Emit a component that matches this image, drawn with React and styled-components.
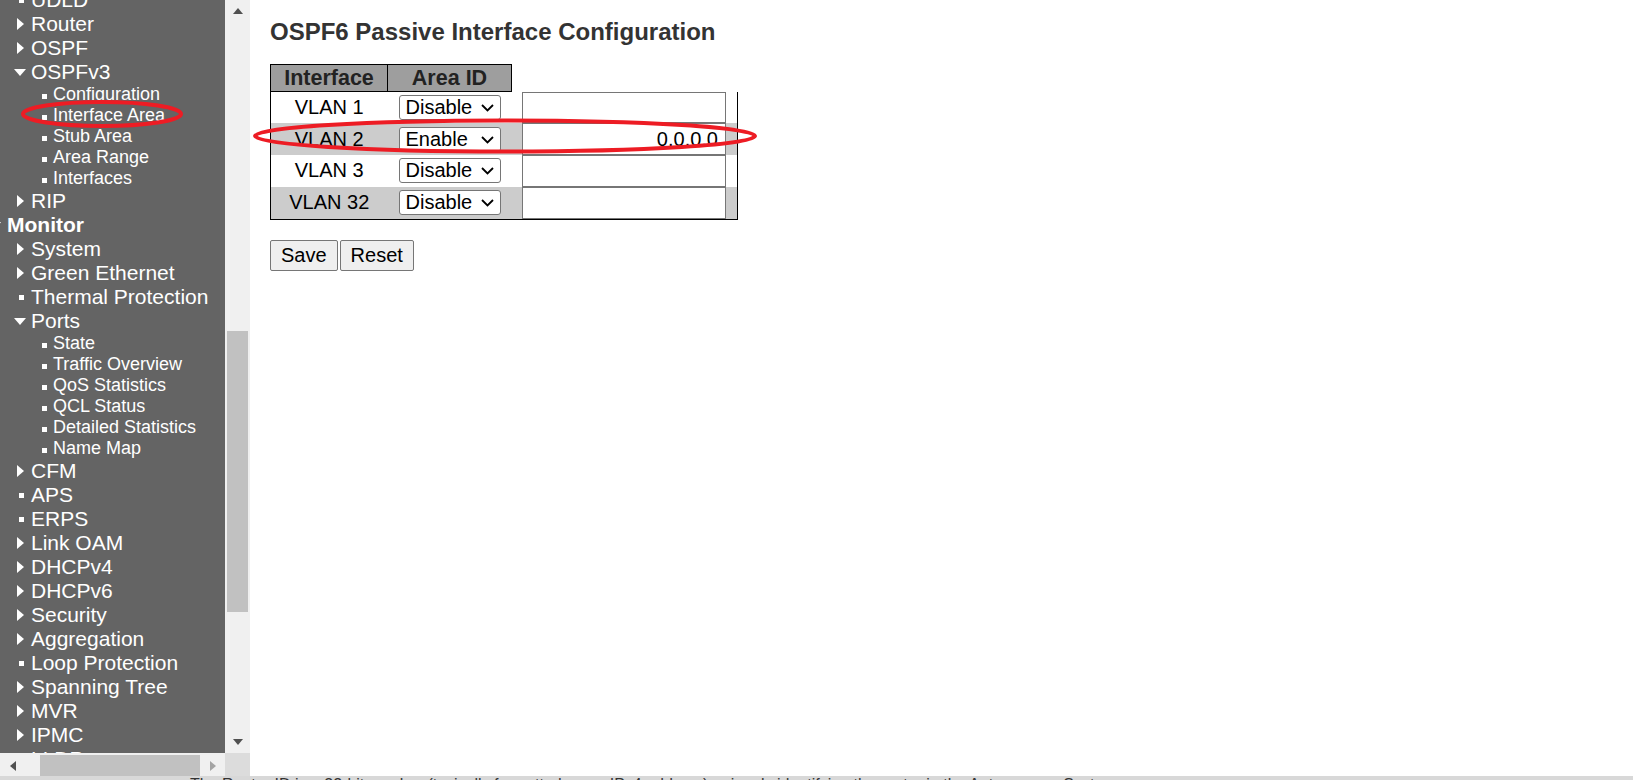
import React from "react";
import styled, { createGlobalStyle } from "styled-components";

const GlobalStyle = createGlobalStyle`
  html, body { margin: 0; padding: 0; overflow: hidden; background: #fff; }
  body { font-family: "Liberation Sans", Arial, sans-serif; }
`;

const Page = styled.div`
  position: relative;
  width: 1633px;
  height: 780px;
  display: grid;
  grid-template-rows: 776px 4px;
  overflow: hidden;
`;

const Top = styled.div`
  display: flex;
  min-height: 0;
`;

const LeftFrame = styled.div`
  width: 250px;
  flex: none;
  display: grid;
  grid-template-rows: 753px 23px;
`;

const FrameBody = styled.div`
  display: flex;
  min-height: 0;
`;

const Sidebar = styled.nav`
  width: 225px;
  flex: none;
  background: #646464;
  color: #fff;
  overflow: hidden;
`;

const MenuList = styled.ul`
  list-style: none;
  margin: -12px 0 0;
  padding: 0;
`;

const MenuItem = styled.li`
  display: flex;
  align-items: center;
  white-space: nowrap;
  height: ${(p) => (p.$sub ? 21 : 24)}px;
  padding-left: ${(p) => (p.$sub ? 35 : 11)}px;
  font-size: ${(p) => (p.$sub ? 18 : 21)}px;
`;

const SectionTitle = styled.li`
  display: flex;
  align-items: center;
  height: 24px;
  font-size: 21px;
  font-weight: bold;
  white-space: nowrap;
`;

const Marker = styled.span`
  width: 18px;
  flex: none;
  display: flex;
  justify-content: center;
  align-items: center;
  margin-right: ${(p) => (p.$sub ? 0 : 2)}px;
  margin-top: ${(p) => (p.$sub ? 3 : 0)}px;

  &::before {
    content: "";
    display: block;
    ${(p) =>
      p.$kind === "right"
        ? `width:0;height:0;border-left:7px solid #fff;border-top:6px solid transparent;border-bottom:6px solid transparent;`
        : p.$kind === "down"
        ? `width:0;height:0;border-top:7px solid #fff;border-left:6.5px solid transparent;border-right:6.5px solid transparent;`
        : `width:5px;height:5px;background:#fff;margin-left:${p.$sub ? 0 : 2}px;`}
  }
`;

const SectionMarker = styled.span`
  width: 0;
  height: 0;
  margin-left: -9px;
  margin-right: 6px;
  border-top: 7px solid #fff;
  border-left: 5.5px solid transparent;
  border-right: 5.5px solid transparent;
`;

const VScroll = styled.div`
  width: 25px;
  flex: none;
  background: #f0f0f0;
  display: flex;
  flex-direction: column;
`;

const ArrowBox = styled.div`
  height: ${(p) => p.$h}px;
  flex: none;
  display: flex;
  justify-content: center;
  align-items: ${(p) => (p.$end ? "flex-start" : "center")};
  padding-top: ${(p) => (p.$end ? 8 : 0)}px;
  box-sizing: border-box;
`;

const Arrow = styled.span`
  width: 0;
  height: 0;
  ${(p) =>
    p.$dir === "up"
      ? `border-bottom:6px solid ${p.$c};border-left:5.5px solid transparent;border-right:5.5px solid transparent;`
      : p.$dir === "down"
      ? `border-top:6px solid ${p.$c};border-left:5.5px solid transparent;border-right:5.5px solid transparent;`
      : p.$dir === "left"
      ? `border-right:6px solid ${p.$c};border-top:5.5px solid transparent;border-bottom:5.5px solid transparent;`
      : `border-left:6px solid ${p.$c};border-top:5.5px solid transparent;border-bottom:5.5px solid transparent;`}
`;

const VTrack = styled.div`
  flex: 1;
  min-height: 0;
`;

const VThumb = styled.div`
  width: 21px;
  margin-left: 2px;
  background: #c1c1c1;
`;

const HScroll = styled.div`
  display: flex;
  background: #f0f0f0;
`;

const HArrowBox = styled.div`
  width: 25px;
  flex: none;
  display: flex;
  align-items: center;
  justify-content: center;
  padding-top: 2px;
  box-sizing: border-box;
`;

const HTrack = styled.div`
  flex: 1;
  display: flex;
  align-items: flex-end;
`;

const HThumb = styled.div`
  height: 21px;
  background: #c1c1c1;
`;

const Corner = styled.div`
  width: 25px;
  flex: none;
  background: #dcdcdc;
`;

const Main = styled.main`
  flex: 1;
  background: #fff;
  padding: 18px 0 0 20px;
`;

const Title = styled.h1`
  margin: 0;
  font-size: 24px;
  line-height: 28px;
  font-weight: bold;
  color: #333;
`;

const ConfigTable = styled.table`
  border-collapse: collapse;
  margin-top: 18px;
  font-size: 20px;
  color: #000;
`;

const HeadCell = styled.th`
  background: #9e9e9e;
  border: 1px solid #000;
  font-size: 21.5px;
  font-weight: bold;
  color: #222;
  padding: 0;
  height: 26px;
  line-height: 25px;
  width: ${(p) => p.$w}px;
`;

const BodyRow = styled.tr`
  background: ${(p) => (p.$alt ? "#cccccc" : "#ffffff")};
  &:last-child { border-bottom: 1px solid #000; }
`;

const Cell = styled.td`
  padding: 0;
  text-align: center;
  vertical-align: middle;
  width: ${(p) => p.$w}px;
  ${(p) => (p.$first ? "border-left: 1px solid #000;" : "")}
  ${(p) => (p.$last ? "border-right: 1px solid #000;" : "")}
`;

const SelectWrap = styled.span`
  position: relative;
  display: inline-block;
  vertical-align: middle;
`;

const Select = styled.select`
  appearance: none;
  -webkit-appearance: none;
  display: block;
  width: 102px;
  height: 25px;
  box-sizing: border-box;
  border: 1px solid #767676;
  border-radius: 3px;
  background: #fff;
  color: #000;
  font-family: "Liberation Sans", Arial, sans-serif;
  font-size: 20px;
  line-height: 23px;
  padding: 0 0 0 6px;
  margin: 0;
`;

const Chevron = styled.svg`
  position: absolute;
  right: 7px;
  top: 9px;
  pointer-events: none;
`;

const TextInput = styled.input`
  display: block;
  margin: 0 auto;
  width: 204px;
  height: 31.75px;
  box-sizing: border-box;
  border: 1px solid #767676;
  background: #fff;
  color: #000;
  font-family: "Liberation Sans", Arial, sans-serif;
  font-size: 20px;
  text-align: right;
  padding: 0 7px;
`;

const ButtonBar = styled.div`
  display: flex;
  gap: 2px;
  margin-top: 20px;
`;

const Button = styled.button`
  height: 31px;
  padding: 0 10px;
  font-family: "Liberation Sans", Arial, sans-serif;
  font-size: 20px;
  color: #000;
  background: #efefef;
  border: 1px solid #767676;
  border-radius: 2px;
`;

const BottomStrip = styled.div`
  background: #d8d8d8;
  overflow: hidden;
  font-size: 16px;
  line-height: 18px;
  color: #333;
  white-space: nowrap;
  padding-left: 190px;
`;

const StripText = styled.div`
  margin-top: 0;
`;

const Overlay = styled.svg`
  position: absolute;
  left: 0;
  top: 0;
  pointer-events: none;
`;

const menu = [
  { label: "UDLD", kind: "square" },
  { label: "Router", kind: "right" },
  { label: "OSPF", kind: "right" },
  { label: "OSPFv3", kind: "down" },
  { label: "Configuration", sub: true },
  { label: "Interface Area", sub: true },
  { label: "Stub Area", sub: true },
  { label: "Area Range", sub: true },
  { label: "Interfaces", sub: true },
  { label: "RIP", kind: "right" },
  { label: "Monitor", section: true },
  { label: "System", kind: "right" },
  { label: "Green Ethernet", kind: "right" },
  { label: "Thermal Protection", kind: "square" },
  { label: "Ports", kind: "down" },
  { label: "State", sub: true },
  { label: "Traffic Overview", sub: true },
  { label: "QoS Statistics", sub: true },
  { label: "QCL Status", sub: true },
  { label: "Detailed Statistics", sub: true },
  { label: "Name Map", sub: true },
  { label: "CFM", kind: "right" },
  { label: "APS", kind: "square" },
  { label: "ERPS", kind: "square" },
  { label: "Link OAM", kind: "right" },
  { label: "DHCPv4", kind: "right" },
  { label: "DHCPv6", kind: "right" },
  { label: "Security", kind: "right" },
  { label: "Aggregation", kind: "right" },
  { label: "Loop Protection", kind: "square" },
  { label: "Spanning Tree", kind: "right" },
  { label: "MVR", kind: "right" },
  { label: "IPMC", kind: "right" },
  { label: "LLDP", kind: "right" },
];

const rows = [
  { name: "VLAN 1", mode: "Disable", area: "" },
  { name: "VLAN 2", mode: "Enable", area: "0.0.0.0" },
  { name: "VLAN 3", mode: "Disable", area: "" },
  { name: "VLAN 32", mode: "Disable", area: "" },
];

function ModeSelect({ value }) {
  return (
    <SelectWrap>
      <Select defaultValue={value}>
        <option>Disable</option>
        <option>Enable</option>
      </Select>
      <Chevron width="13" height="8" viewBox="0 0 13 8">
        <polyline points="1,1 6.5,6.5 12,1" fill="none" stroke="#000" strokeWidth="1.8" />
      </Chevron>
    </SelectWrap>
  );
}

export default function App() {
  const trackLen = 709;
  const thumbTop = 309;
  const thumbLen = 281;
  return (
    <Page>
      <GlobalStyle />
      <Top>
        <LeftFrame>
          <FrameBody>
            <Sidebar>
              <MenuList>
                {menu.map((m) =>
                  m.section ? (
                    <SectionTitle key={m.label}>
                      <SectionMarker />
                      {m.label}
                    </SectionTitle>
                  ) : (
                    <MenuItem key={m.label} $sub={m.sub}>
                      <Marker $sub={m.sub} $kind={m.sub ? "square" : m.kind} />
                      {m.label}
                    </MenuItem>
                  )
                )}
              </MenuList>
            </Sidebar>
            <VScroll>
              <ArrowBox $h={22}>
                <Arrow $dir="up" $c="#505050" />
              </ArrowBox>
              <VTrack style={{ height: trackLen }}>
                <VThumb style={{ marginTop: thumbTop, height: thumbLen }} />
              </VTrack>
              <ArrowBox $h={22} $end>
                <Arrow $dir="down" $c="#505050" />
              </ArrowBox>
            </VScroll>
          </FrameBody>
          <HScroll>
            <HArrowBox>
              <Arrow $dir="left" $c="#505050" />
            </HArrowBox>
            <HTrack>
              <HThumb style={{ marginLeft: 15, width: 160 }} />
            </HTrack>
            <HArrowBox>
              <Arrow $dir="right" $c="#a3a3a3" />
            </HArrowBox>
            <Corner />
          </HScroll>
        </LeftFrame>
        <Main>
          <Title>OSPF6 Passive Interface Configuration</Title>
          <ConfigTable>
            <thead>
              <tr>
                <HeadCell $w={116}>Interface</HeadCell>
                <HeadCell $w={123}>Area ID</HeadCell>
              </tr>
            </thead>
            <tbody>
              {rows.map((r, i) => (
                <BodyRow key={r.name} $alt={i % 2 === 1}>
                  <Cell $first $w={116}>{r.name}</Cell>
                  <Cell $w={123}>
                    <ModeSelect value={r.mode} />
                  </Cell>
                  <Cell $last $w={225}>
                    <TextInput type="text" defaultValue={r.area} />
                  </Cell>
                </BodyRow>
              ))}
            </tbody>
          </ConfigTable>
          <ButtonBar>
            <Button type="button">Save</Button>
            <Button type="button">Reset</Button>
          </ButtonBar>
        </Main>
      </Top>
      <BottomStrip>
        <StripText>
          The Router ID is a 32-bit number (typically formatted as an IPv4 address) uniquely identifying the router in the Autonomous System.
        </StripText>
      </BottomStrip>
      <Overlay width="1633" height="780" viewBox="0 0 1633 780">
        <ellipse cx="102" cy="114" rx="79" ry="12" fill="none" stroke="#ed1c24" strokeWidth="4" />
        <ellipse cx="505" cy="136" rx="250" ry="15.5" fill="none" stroke="#ed1c24" strokeWidth="4" />
      </Overlay>
    </Page>
  );
}
